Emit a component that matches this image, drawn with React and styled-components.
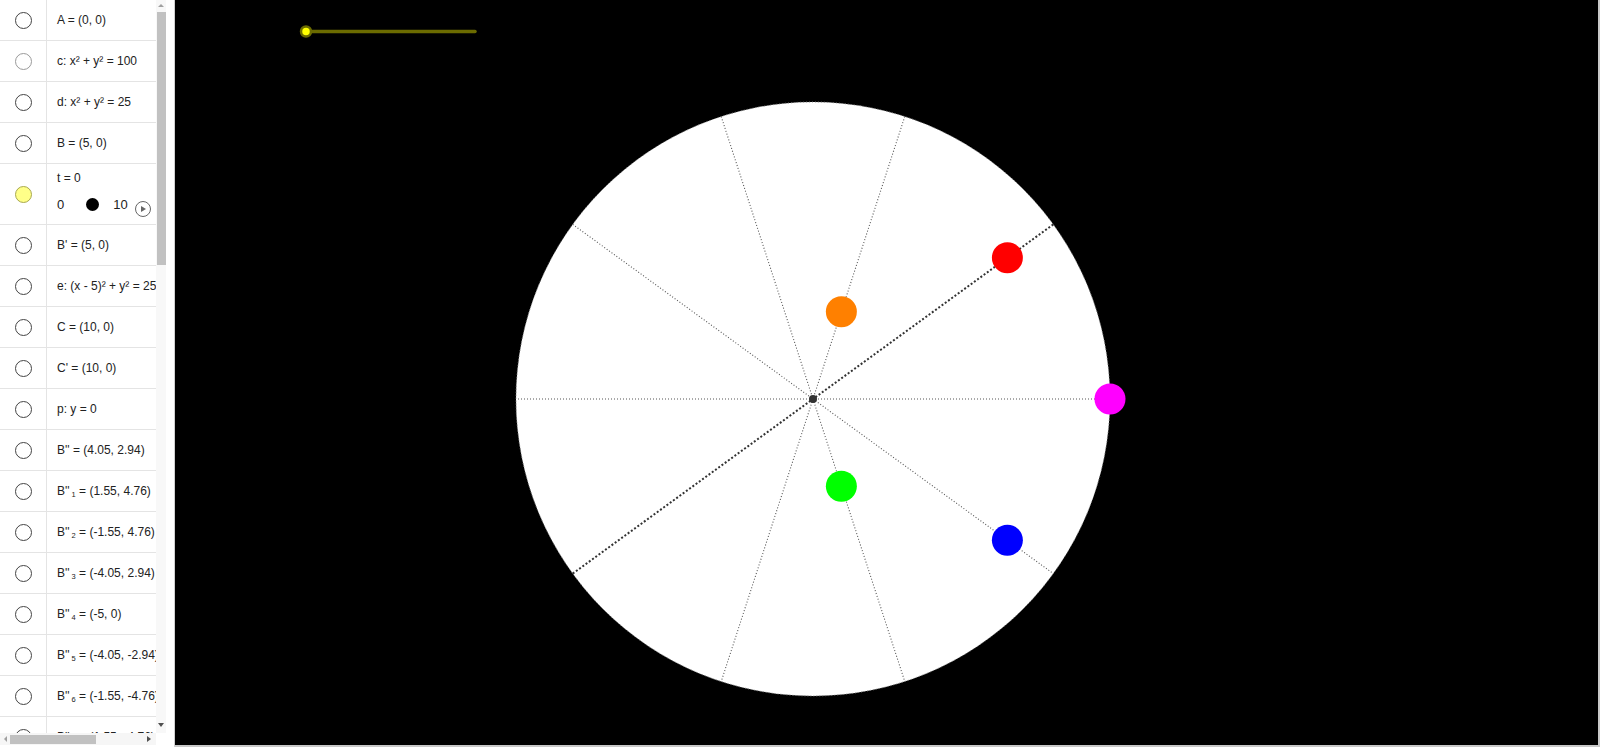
import React from "react";
import styled, { createGlobalStyle } from "styled-components";

const Global = createGlobalStyle`
  html, body { margin: 0; padding: 0; background: #fff; }
  body { font-family: "Liberation Sans", Arial, sans-serif; overflow: hidden; }
  #root { width: 1600px; height: 747px; }
`;

const Page = styled.div`
  display: flex;
  width: 1600px;
  height: 747px;
  background: #c8c8c8;
`;

const Sidebar = styled.div`
  display: flex;
  width: 174px;
  height: 747px;
  background: #fff;
  border-right: 1px solid #cfcfcf;
  flex-shrink: 0;
`;

const ListArea = styled.div`
  display: flex;
  flex-direction: column;
  width: 156px;
  height: 747px;
`;

const List = styled.div`
  flex: 1;
  overflow: hidden;
  display: flex;
  flex-direction: column;
`;

const Row = styled.div`
  display: grid;
  grid-template-columns: 47px 1fr;
  height: ${(p) => p.$h || 40}px;
  flex-shrink: 0;
  border-bottom: 1px solid #e4e4e4;
`;

const IconCell = styled.div`
  display: flex;
  align-items: center;
  justify-content: center;
  border-right: 1px solid #e4e4e4;
`;

const Marble = styled.div`
  width: 15px;
  height: 15px;
  border-radius: 50%;
  box-sizing: content-box;
  border: 1.3px solid ${(p) => p.$stroke || "#444"};
  background: ${(p) => p.$fill || "#fff"};
`;

const TextCell = styled.div`
  display: flex;
  align-items: center;
  padding-left: 10px;
  font-size: 12px;
  color: #222;
  white-space: pre;
  overflow: hidden;
`;

const Sub = styled.span`
  display: inline-block;
  font-size: 7.5px;
  transform: translateY(3px);
  margin-left: 2px;
`;

const SliderCell = styled.div`
  display: flex;
  flex-direction: column;
  padding-left: 10px;
  padding-top: 6px;
  color: #222;
  white-space: nowrap;
  overflow: hidden;
`;

const SliderLabel = styled.div`
  font-size: 12px;
  height: 17px;
  line-height: 17px;
`;

const SliderLine = styled.div`
  display: flex;
  align-items: center;
  margin-top: 7px;
  font-size: 13px;
  height: 20px;
`;

const Thumb = styled.div`
  width: 13px;
  height: 13px;
  border-radius: 50%;
  background: #000;
  margin-left: 22px;
  margin-right: 14px;
`;

const PlayButton = styled.div`
  width: 14px;
  height: 14px;
  border-radius: 50%;
  border: 1.5px solid #666;
  margin-left: 7px;
  margin-top: 10px;
  display: flex;
  align-items: center;
  justify-content: center;
  &::after {
    content: "";
    width: 0;
    height: 0;
    margin-left: 2px;
    border-top: 3.5px solid transparent;
    border-bottom: 3.5px solid transparent;
    border-left: 5px solid #666;
  }
`;

const HScroll = styled.div`
  display: flex;
  align-items: center;
  height: 12px;
  margin-bottom: 2px;
  background: #f6f6f6;
  flex-shrink: 0;
`;

const HThumb = styled.div`
  width: 86px;
  height: 9px;
  background: #c1c1c1;
  margin-left: 3px;
`;

const HSpacer = styled.div`
  flex: 1;
`;

const ArrowLeft = styled.div`
  width: 0;
  height: 0;
  margin-left: 4px;
  border-top: 3px solid transparent;
  border-bottom: 3px solid transparent;
  border-right: 3px solid #a0a0a0;
`;

const ArrowRight = styled.div`
  width: 0;
  height: 0;
  margin-right: 5px;
  border-top: 3.5px solid transparent;
  border-bottom: 3.5px solid transparent;
  border-left: 4px solid #505050;
`;

const VScroll = styled.div`
  display: flex;
  flex-direction: column;
  align-items: center;
  width: 10px;
  height: 733px;
  background: #f8f8f8;
`;

const ArrowUp = styled.div`
  width: 0;
  height: 0;
  margin-top: 4px;
  border-left: 3px solid transparent;
  border-right: 3px solid transparent;
  border-bottom: 3px solid #a0a0a0;
`;

const VThumb = styled.div`
  width: 9px;
  height: 253px;
  margin-top: 5px;
  background: #c1c1c1;
`;

const VSpacer = styled.div`
  flex: 1;
`;

const ArrowDown = styled.div`
  width: 0;
  height: 0;
  margin-bottom: 6px;
  border-left: 3.5px solid transparent;
  border-right: 3.5px solid transparent;
  border-top: 4px solid #505050;
`;

const Canvas = styled.div`
  width: 1423px;
  height: 745px;
  background: #000;
  flex-shrink: 0;
`;

const Drawing = styled.svg`
  display: block;
  width: 1423px;
  height: 745px;
`;

const rows = [
  { t: <>A = (0, 0)</> },
  { t: <>c: x² + y² = 100</>, stroke: "#9a9a9a" },
  { t: <>d: x² + y² = 25</> },
  { t: <>B = (5, 0)</> },
  { slider: true },
  { t: <>B' = (5, 0)</> },
  { t: <>e: (x - 5)² + y² = 25</> },
  { t: <>C = (10, 0)</> },
  { t: <>C' = (10, 0)</> },
  { t: <>p: y = 0</> },
  { t: <>B'' = (4.05, 2.94)</> },
  { t: <>B''<Sub>1</Sub>{" = (1.55, 4.76)"}</> },
  { t: <>B''<Sub>2</Sub>{" = (-1.55, 4.76)"}</> },
  { t: <>B''<Sub>3</Sub>{" = (-4.05, 2.94)"}</> },
  { t: <>B''<Sub>4</Sub>{" = (-5, 0)"}</> },
  { t: <>B''<Sub>5</Sub>{" = (-4.05, -2.94)"}</> },
  { t: <>B''<Sub>6</Sub>{" = (-1.55, -4.76)"}</> },
  { t: <>B''<Sub>7</Sub>{" = (1.55, -4.76)"}</> },
];

const CX = 638;
const CY = 399;
const R = 297;
const rad = (d) => (d * Math.PI) / 180;

const spokes = [0, 36, 72, 108, 144].map((a) => ({
  a,
  x1: CX + R * Math.cos(rad(a)),
  y1: CY - R * Math.sin(rad(a)),
  x2: CX - R * Math.cos(rad(a)),
  y2: CY + R * Math.sin(rad(a)),
}));

const dots = [
  { a: 0, c: "#ff00ff" },
  { a: 36, c: "#ff0000" },
  { a: 72, c: "#ff8000" },
  { a: -36, c: "#0000ff" },
  { a: -72, c: "#00ff00" },
].map((d) => {
  const dist = R * Math.cos(rad(d.a));
  return {
    ...d,
    x: CX + dist * Math.cos(rad(d.a)),
    y: CY - dist * Math.sin(rad(d.a)),
  };
});

export default function App() {
  return (
    <>
      <Global />
      <Page>
        <Sidebar>
          <ListArea>
            <List>
              {rows.map((r, i) =>
                r.slider ? (
                  <Row key={i} $h={60}>
                    <IconCell>
                      <Marble $fill="#ffff88" $stroke="#a8a850" />
                    </IconCell>
                    <SliderCell>
                      <SliderLabel>t = 0</SliderLabel>
                      <SliderLine>
                        <span>0</span>
                        <Thumb />
                        <span>10</span>
                        <PlayButton />
                      </SliderLine>
                    </SliderCell>
                  </Row>
                ) : (
                  <Row key={i}>
                    <IconCell>
                      <Marble $stroke={r.stroke} />
                    </IconCell>
                    <TextCell>{r.t}</TextCell>
                  </Row>
                )
              )}
            </List>
            <HScroll>
              <ArrowLeft />
              <HThumb />
              <HSpacer />
              <ArrowRight />
            </HScroll>
          </ListArea>
          <VScroll>
            <ArrowUp />
            <VThumb />
            <VSpacer />
            <ArrowDown />
          </VScroll>
        </Sidebar>
        <Canvas>
          <Drawing viewBox="0 0 1423 745">
            <line x1="130" y1="31.5" x2="300" y2="31.5" stroke="#6b6b00" strokeWidth="3.5" strokeLinecap="round" />
            <circle cx="131" cy="31.5" r="5" fill="#ffff00" stroke="#6b6b00" strokeWidth="2.5" />
            <circle cx={CX} cy={CY} r={R} fill="#ffffff" stroke="#888" strokeWidth="1" strokeDasharray="1 2" />
            {spokes.map((s) => (
              <line
                key={s.a}
                x1={s.x1}
                y1={s.y1}
                x2={s.x2}
                y2={s.y2}
                stroke={s.a === 36 ? "#333" : "#555"}
                strokeWidth={s.a === 36 ? 2 : 1.1}
                strokeDasharray={s.a === 36 ? "2 2" : "1 2"}
              />
            ))}
            <circle cx={CX} cy={CY} r="4" fill="#333" />
            {dots.map((d) => (
              <circle key={d.a} cx={d.x} cy={d.y} r="15.5" fill={d.c} />
            ))}
          </Drawing>
        </Canvas>
      </Page>
    </>
  );
}
